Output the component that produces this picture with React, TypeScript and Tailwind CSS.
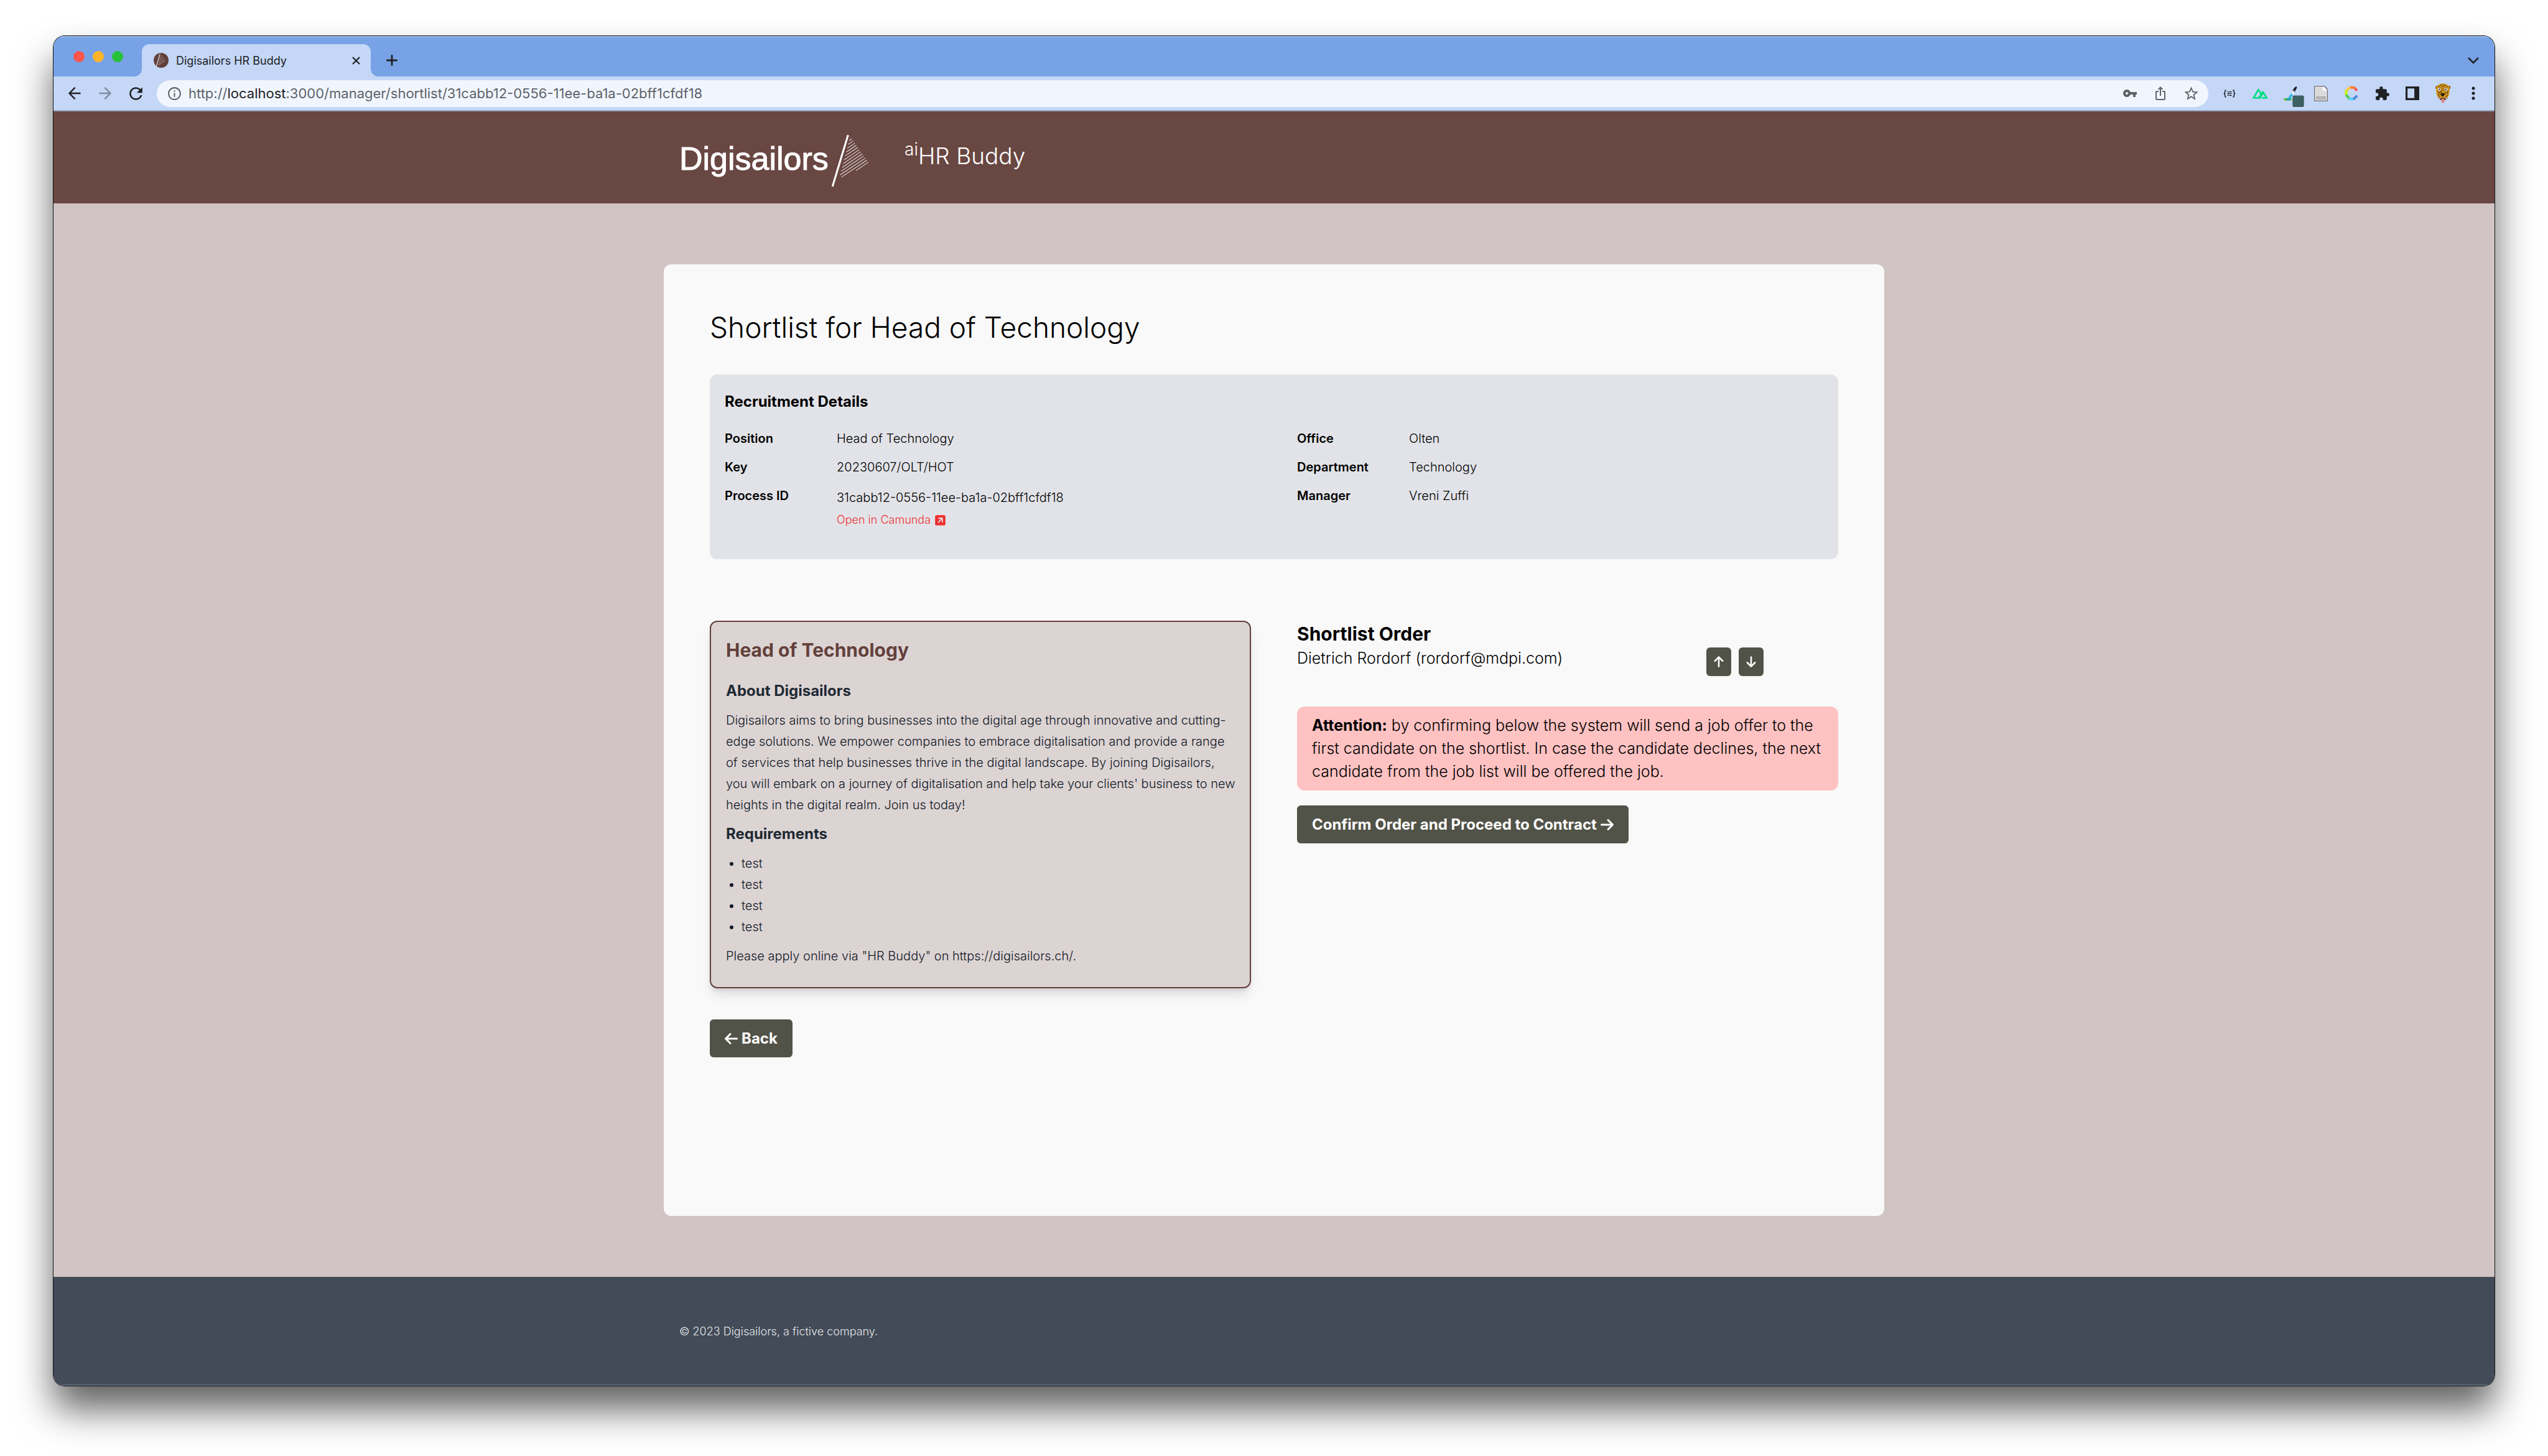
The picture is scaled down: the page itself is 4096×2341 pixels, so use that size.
import type { ReactNode } from "react";
import { FaArrowDown, FaArrowLeft, FaArrowRight, FaArrowUp, FaSquareArrowUpRight } from "react-icons/fa6";
import { MdExtension, MdInfoOutline, MdIosShare, MdRefresh, MdStarBorder, MdVpnKey } from "react-icons/md";

const logoStripes = [
  [1118, 51, 1120, 50],
  [1113, 75, 1129, 65],
  [1107, 99, 1139, 77],
  [1101, 123, 1149, 91],
  [1095, 147, 1158, 104],
  [1088, 171, 1167, 118],
  [1081, 196, 1177, 132],
  [1075, 220, 1186, 145],
  [1069, 244, 1196, 158],
  [1062, 268, 1205, 171],
  [1056, 291, 1215, 185],
  [1064, 305, 1224, 198],
  [1156, 264, 1233, 211],
];

const leopardSpots = [
  [1005, 275], [1018, 268], [1032, 265], [1046, 268], [1058, 276], [1012, 283], [1026, 278], [1038, 276], [1052, 284],
  [1000, 306], [1004, 318], [1003, 330], [1012, 312], [1062, 304], [1060, 316], [1058, 330], [1050, 312], [1022, 300],
  [1040, 298], [1030, 290], [1010, 342], [1052, 340], [1020, 310], [1044, 322], [1014, 326],
];

function Logo() {
  return (
    <svg width="312" height="148" viewBox="0 0 312 148" role="img" aria-label="Digisailors logo">
      <text x="0" y="94" fill="#fff" stroke="#fff" strokeWidth="1" fontSize="52" fontFamily="Liberation Sans, Arial, sans-serif">
        Digisailors
      </text>
      <g transform="translate(-11.3 27.9) scale(.2555)" stroke="#fff">
        <path d="M1106 40 1008 364" strokeWidth="12" />
        {logoStripes.map(([x1, y1, x2, y2]) => (
          <line key={y1} x1={x1} y1={y1} x2={x2} y2={y2} strokeWidth="4" opacity="0.85" />
        ))}
      </g>
    </svg>
  );
}

function Favicon() {
  return (
    <svg width="24" height="24" viewBox="0 0 96 96" aria-hidden="true" className="shrink-0">
      <circle cx="48" cy="48" r="48" fill="#63403b" />
      <path d="M41 6 17 88" stroke="#fff" strokeWidth="4" />
      <path d="m40 24 10-8M36 38l21-15M34 50l29-20M30 62l38-26M28 76l45-31M32 78l40-28" stroke="#b9a5a2" strokeWidth="2.5" />
    </svg>
  );
}

function ToolButton({ label, children }: { label: string; children: ReactNode }) {
  return (
    <button type="button" aria-label={label} className="flex h-7 w-7 shrink-0 items-center justify-center">
      {children}
    </button>
  );
}

function PickerIcon() {
  return (
    <svg width="46" height="43" viewBox="-19 234 180 168" className="shrink-0">
      <path d="M26 354c8-8 24-8 34-10l18 4v12c-14 4-44 4-52-6z" fill="#4fb531" />
      <path d="m72 322 16-20 10 8-18 26-14 20-16-2z" fill="#37b4e0" />
      <path d="m44 350 22-4 8 10-20 4z" fill="#2aa3d4" />
      <path d="m76 318 12-16 10 8-10 16z" fill="#eef3fb" />
      <path d="m84 298 10-14c4-8 10-12 16-10 4 4 0 12-4 18l-8 14z" fill="#1c1d20" />
      <path d="m84 296 18 13" stroke="#8d97a8" strokeWidth="5" />
      <rect x="84" y="330" width="72" height="72" rx="10" fill="#3d6063" />
    </svg>
  );
}

function BrowserChrome() {
  return (
    <div className="shrink-0 text-[#202124]">
      <div className="flex h-[65px] items-end bg-[#78a2e6] pr-5 pl-8 shadow-[inset_0_2px_0_#9dbdf0]">
        <div className="flex h-full items-center gap-[13px]">
          <button type="button" aria-label="Close window" className="size-[18px] rounded-full bg-[#ff544d]" />
          <button type="button" aria-label="Minimise window" className="size-[18px] rounded-full bg-[#ffb429]" />
          <button type="button" aria-label="Zoom window" className="size-[18px] rounded-full bg-[#25c138]" />
        </div>
        <div className="relative ml-[30px] flex h-[52px] w-[368px] items-center rounded-t-xl bg-[#c4d7f7] pr-[14px] pl-[19px]">
          <span className="absolute bottom-0 -left-3 size-3 bg-[radial-gradient(circle_at_0_0,transparent_12px,#c4d7f7_12px)]" />
          <span className="absolute -right-3 bottom-0 size-3 bg-[radial-gradient(circle_at_100%_0,transparent_12px,#c4d7f7_12px)]" />
          <Favicon />
          <span className="ml-3 flex-1 truncate text-[18px]">Digisailors HR Buddy</span>
          <button type="button" aria-label="Close tab" className="flex size-5 items-center justify-center">
            <svg width="13" height="13" viewBox="0 0 13 13" stroke="#202124" strokeWidth="2.2">
              <path d="m1 1 11 11M12 1 1 12" />
            </svg>
          </button>
        </div>
        <button type="button" aria-label="New tab" className="ml-5 flex h-[52px] w-7 items-center justify-center">
          <svg width="18" height="18" viewBox="0 0 18 18" stroke="#202124" strokeWidth="2.8" strokeLinecap="round">
            <path d="M9 1.4v15.2M1.4 9h15.2" />
          </svg>
        </button>
        <button type="button" aria-label="Search tabs" className="ml-auto flex h-[52px] w-7 items-center justify-center">
          <svg width="18" height="12" viewBox="0 0 18 12" fill="none" stroke="#202124" strokeWidth="2.6">
            <path d="m1 2 8 8 8-8" />
          </svg>
        </button>
      </div>
      <div className="flex h-14 items-center border-b-2 border-[#97a8c6] bg-[#c4d7f7] px-5">
        <div className="flex gap-[21px]">
          <ToolButton label="Back">
            <svg width="20" height="20" viewBox="0 0 20 20" fill="none" stroke="#202124" strokeWidth="2.4" strokeLinecap="round" strokeLinejoin="round">
              <path d="M18.6 10H1.6M10 1.4 1.4 10l8.6 8.6" />
            </svg>
          </ToolButton>
          <ToolButton label="Forward">
            <svg width="20" height="20" viewBox="0 0 20 20" fill="none" stroke="#7e8a9f" strokeWidth="2.4" strokeLinecap="round" strokeLinejoin="round">
              <path d="M1.4 10h17M10 1.4l8.6 8.6-8.6 8.6" />
            </svg>
          </ToolButton>
          <ToolButton label="Reload">
            <MdRefresh className="size-[31px] shrink-0" />
          </ToolButton>
        </div>
        <div className="mx-5 flex h-[43px] flex-1 items-center rounded-full bg-[#f1f6fe] pr-[14px] pl-4 text-[#5f6368]">
          <MdInfoOutline className="size-[25px] shrink-0" />
          <div role="textbox" aria-label="Address" tabIndex={0} className="ml-2.5 flex-1 truncate text-[22px]">
            http://<span className="text-[#202124]">localhost</span>:3000/manager/shortlist/31cabb12-0556-11ee-ba1a-02bff1cfdf18
          </div>
          <div className="flex gap-[21px]">
            <ToolButton label="Passwords">
              <MdVpnKey className="size-6 shrink-0" />
            </ToolButton>
            <ToolButton label="Share">
              <MdIosShare className="size-6 shrink-0" />
            </ToolButton>
            <ToolButton label="Bookmark">
              <MdStarBorder className="size-[27px] shrink-0" />
            </ToolButton>
          </div>
        </div>
        <div className="flex items-center gap-[21px]">
          <ToolButton label="JSON formatter">
            <svg width="20" height="13" viewBox="0 0 26 16" fill="none" stroke="#202124" strokeWidth="2">
              <path d="M6 1C3 1 3.500 3 3.500 5S3 8 1 8c2 0 2.500 1 2.500 3S3 15 6 15M20 1c3 0 2.500 2 2.500 4s.5 3 2.500 3c-2 0-2.500 1-2.500 3s.5 4-2.500 4" />
              <path d="M8 4.500h10M8 8h10M8 11.500h10M15 2.800v3.400M11 6.300v3.400M15 9.800v3.400" strokeWidth="1.400" />
            </svg>
          </ToolButton>
          <ToolButton label="Nuxt devtools">
            <svg width="25" height="17" viewBox="0 0 50 34" fill="none" stroke="#00dc82" strokeWidth="5" strokeLinejoin="round">
              <path d="M20 31H3L19 4l11 19M20 31l13-20 13 20H30M20 31h4l9-15" />
            </svg>
          </ToolButton>
          <ToolButton label="Colour picker">
            <PickerIcon />
          </ToolButton>
          <ToolButton label="Document">
            <svg width="22" height="25" viewBox="0 0 84 96" className="shrink-0">
              <path d="M3 3h60l18 18v72H3z" fill="#fff" stroke="#616161" strokeWidth="5" strokeLinejoin="round" />
              <path d="M10 10h43v20h21v56H10z" fill="#dadada" />
              <path d="M58 6v20h20" fill="#fff" stroke="#fff" strokeWidth="3" />
              <rect x="14" y="68" width="56" height="14" fill="#bdbdbd" stroke="#8d8d8d" strokeWidth="3" />
            </svg>
          </ToolButton>
          <ToolButton label="Colour contrast">
            <svg width="22" height="24" viewBox="410 271 88 94" fill="none" strokeWidth="16" className="shrink-0">
              <path d="m472 281 18 20" stroke="#ff5252" />
              <path d="M444 281h31" stroke="#ff7d2b" />
              <path d="m420 302 25-23" stroke="#ffc845" />
              <path d="M420 330v-30" stroke="#c3f500" />
              <path d="m420 328 22 27" stroke="#58c957" />
              <path d="M438 354h32" stroke="#4dd5ff" />
              <path d="m466 357 25-24" stroke="#5486d6" />
            </svg>
          </ToolButton>
          <ToolButton label="Extensions">
            <MdExtension className="size-[25px] shrink-0" />
          </ToolButton>
          <ToolButton label="Side panel">
            <svg width="22" height="22" viewBox="0 0 84 84">
              <path fillRule="evenodd" d="M0 0h84v84H0zM12 12v60h42V12z" fill="#202124" />
            </svg>
          </ToolButton>
          <ToolButton label="Profile">
            <svg width="26" height="34" viewBox="980 252 102 132" className="shrink-0">
              <circle cx="996" cy="282" r="12" fill="#9a6b1c" />
              <circle cx="1068" cy="282" r="12" fill="#9a6b1c" />
              <path d="M1031 256c28 0 44 18 42 44-1 22-4 36-14 48-6 10-16 14-28 14s-22-4-28-14c-10-12-13-26-14-48-2-26 14-44 42-44z" fill="#d6981d" />
              {leopardSpots.map(([x, y]) => (
                <circle key={`${x}-${y}`} cx={x} cy={y} r="3.6" fill="#3b2a10" />
              ))}
              <circle cx="1009" cy="293" r="9" fill="#e9eef5" />
              <circle cx="1051" cy="293" r="9" fill="#e9eef5" />
              <circle cx="1010" cy="293" r="4.500" fill="#222" />
              <circle cx="1050" cy="293" r="4.500" fill="#222" />
              <path d="M1018 322c0-8 24-8 24 0l-6 16h-12z" fill="#2b210f" />
              <path d="M1004 342c16 8 40 8 54 0-2 14-12 22-27 22s-25-8-27-22z" fill="#4a1f1b" />
              <path d="m1006 344 6 12 5-10zM1056 344l-6 12-5-10z" fill="#fff" />
              <path d="M1020 352h22c0 16-4 28-11 28s-11-12-11-28z" fill="#d98a83" />
            </svg>
          </ToolButton>
          <ToolButton label="Menu">
            <svg width="6" height="22" viewBox="0 0 6 22" fill="#202124">
              <circle cx="3" cy="3" r="2.500" />
              <circle cx="3" cy="11" r="2.500" />
              <circle cx="3" cy="19" r="2.500" />
            </svg>
          </ToolButton>
        </div>
      </div>
    </div>
  );
}

function Detail({ label, children }: { label: string; children: ReactNode }) {
  return (
    <div className="flex">
      <dt className="w-[180px] shrink-0 font-semibold">{label}</dt>
      <dd className="font-light">{children}</dd>
    </div>
  );
}

function RecruitmentDetails() {
  return (
    <section className="mt-12 rounded-xl bg-[#e2e3e8] px-6 pt-[25px] pb-[45px]">
      <h2 className="text-[24px] leading-[37px] font-bold">Recruitment Details</h2>
      <div className="mt-[26px] grid grid-cols-2 gap-[74px] text-[20px] leading-[30px]">
        <dl className="flex flex-col gap-4">
          <Detail label="Position">Head of Technology</Detail>
          <Detail label="Key">20230607/OLT/HOT</Detail>
          <Detail label="Process ID">
            <span className="block leading-9">31cabb12-0556-11ee-ba1a-02bff1cfdf18</span>
            <a href="#camunda" className="flex items-center gap-1.5 text-[18px] leading-9 text-[#ef3030]">
              Open in Camunda
              <FaSquareArrowUpRight className="size-[19px]" />
            </a>
          </Detail>
        </dl>
        <dl className="flex flex-col gap-4">
          <Detail label="Office">Olten</Detail>
          <Detail label="Department">Technology</Detail>
          <Detail label="Manager">Vreni Zuffi</Detail>
        </dl>
      </div>
    </section>
  );
}

function JobAdvert() {
  return (
    <article className="rounded-xl border-2 border-[#63403b] bg-[#dcd4d3] pt-6 pr-5 pb-[33px] pl-6 text-[20px] leading-[34px] font-light text-[#111827] shadow-[0_12px_18px_-3px_rgba(0,0,0,0.12),0_5px_8px_-4px_rgba(0,0,0,0.12)]">
      <h2 className="text-[30px] leading-[42px] font-bold text-[#63403b]">Head of Technology</h2>
      <h3 className="mt-7 text-[24px] font-bold text-[#1f2933]">About Digisailors</h3>
      <p className="mt-[13px]">
        Digisailors aims to bring businesses into the digital age through innovative and cutting-edge solutions. We
        empower companies to embrace digitalisation and provide a range of services that help businesses thrive in the
        digital landscape. By joining Digisailors, you will embark on a journey of digitalisation and help take your
        clients' business to new heights in the digital realm. Join us today!
      </p>
      <h3 className="mt-[13px] text-[24px] font-bold text-[#1f2933]">Requirements</h3>
      <ul className="mt-[13px] list-disc pl-[25px]">
        <li>test</li>
        <li>test</li>
        <li>test</li>
        <li>test</li>
      </ul>
      <p className="mt-[13px]">Please apply online via "HR Buddy" on https://digisailors.ch/.</p>
    </article>
  );
}

function ShortlistOrder() {
  return (
    <section>
      <h2 className="text-[30px] leading-[42px] font-bold">Shortlist Order</h2>
      <ul className="text-[25px] leading-[37px] font-light">
        <li className="flex items-start justify-between pr-[120px]">
          <span>Dietrich Rordorf (rordorf@mdpi.com)</span>
          <span className="flex gap-3 pt-px">
            <button type="button" aria-label="Move up" className="flex h-[46px] w-10 items-center justify-center rounded-md bg-[#525348] text-white">
              <FaArrowUp className="size-5" />
            </button>
            <button type="button" aria-label="Move down" className="flex h-[46px] w-10 items-center justify-center rounded-md bg-[#525348] text-white">
              <FaArrowDown className="size-5" />
            </button>
          </span>
        </li>
      </ul>
      <p className="mt-[49px] rounded-xl bg-[#fec2c2] py-3 pr-5 pl-6 text-[25px] leading-[37px] font-light">
        <strong className="font-bold">Attention:</strong> by confirming below the system will send a job offer to the
        first candidate on the shortlist. In case the candidate declines, the next candidate from the job list will be
        offered the job.
      </p>
      <button type="button" className="mt-6 flex items-center gap-1.5 rounded-md bg-[#525348] px-6 py-3 text-[24px] leading-[37px] font-bold text-white">
        Confirm Order and Proceed to Contract
        <FaArrowRight className="h-6 w-[21px]" />
      </button>
    </section>
  );
}

export default function App() {
  return (
    <div className="flex min-h-screen flex-col bg-white px-[86px] pt-[58px] pb-[113px] font-['Inter',sans-serif] text-black">
      <div className="flex flex-1 flex-col overflow-hidden rounded-[18px] shadow-[0_0_0_1px_#111,0_38px_60px_rgba(0,0,0,0.62)]">
        <BrowserChrome />
        <header className="shrink-0 bg-[#694742] text-white">
          <div className="mx-auto flex h-[148px] w-full max-w-[1962px] items-center gap-[50px] px-[25px]">
            <Logo />
            <div className="pb-1 text-[37px] leading-[48px] font-light">
              <sup className="text-[28px]">ai</sup>HR Buddy
            </div>
          </div>
        </header>
        <main className="flex flex-1 flex-col bg-[#d0c4c4] py-[98px]">
          <div className="mx-auto w-full max-w-[1962px] flex-1 rounded-xl bg-[#f9f9f9] p-[74px]">
            <h1 className="text-[46px] leading-[55px] font-light">Shortlist for Head of Technology</h1>
            <RecruitmentDetails />
            <div className="mt-[99px] grid grid-cols-2 items-start gap-[74px]">
              <JobAdvert />
              <ShortlistOrder />
            </div>
            <button type="button" className="mt-[50px] flex items-center gap-1.5 rounded-md bg-[#525348] px-6 py-3 text-[24px] leading-[37px] font-bold text-white">
              <FaArrowLeft className="h-6 w-[21px]" />
              Back
            </button>
          </div>
        </main>
        <footer className="shrink-0 bg-[#424b57] text-[#e5e7eb] shadow-[inset_0_-2px_0_#606a7b]">
          <p className="mx-auto w-full max-w-[1962px] px-[25px] pt-[71px] pb-[70px] text-[18px] leading-[34px] font-light">
            © 2023 Digisailors, a fictive company.
          </p>
        </footer>
      </div>
    </div>
  );
}
